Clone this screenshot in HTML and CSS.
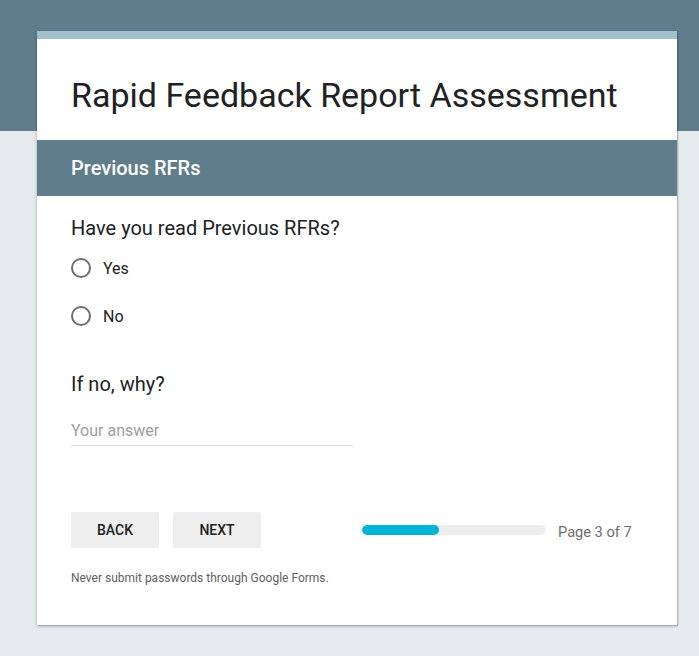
FILE: index.html
```html
<!DOCTYPE html>
<html>
<head>
<meta charset="utf-8">
<link rel="stylesheet" href="styles.css">
</head>
<body>
<div class="page">
  <div class="card">
    <div class="title-area">
      <h1 class="title">Rapid Feedback Report Assessment</h1>
    </div>
    <div class="section-header">Previous RFRs</div>
    <div class="card-body">
      <div class="question">Have you read Previous RFRs?</div>
      <div class="options">
        <label class="option"><span class="radio"></span><span class="option-label">Yes</span></label>
        <label class="option"><span class="radio"></span><span class="option-label">No</span></label>
      </div>
      <div class="question question-2">If no, why?</div>
      <div class="answer"><span class="placeholder">Your answer</span></div>
      <div class="nav-row">
        <div class="buttons">
          <div class="btn">BACK</div>
          <div class="btn">NEXT</div>
        </div>
        <div class="progress">
          <div class="track"><div class="fill" style="width: 42%"></div></div>
          <span class="page-count">Page 3 of 7</span>
        </div>
      </div>
      <div class="footer-note">Never submit passwords through Google Forms.</div>
    </div>
  </div>
</div>
</body>
</html>
```

FILE: styles.css
```css
html, body {
  margin: 0;
  padding: 0;
}
body {
  background: linear-gradient(to bottom, #607d8b 0, #607d8b 131px, #e5eaed 131px, #e5eaed 100%);
  min-height: 656px;
  font-family: Roboto, "Noto Sans", sans-serif;
}
.page {
  padding-top: 31px;
  padding-left: 37px;
}
.card {
  width: 640px;
  background: #ffffff;
  border-top: 8px solid #a2bfd0;
  box-shadow: 0 1px 3px rgba(0,0,0,0.28), 1px 1px 1px rgba(0,0,0,0.12);
}
.title-area {
  height: 101px;
  padding: 0 34px;
  box-sizing: border-box;
  padding-top: 36px;
}
.title {
  margin: 0;
  font-size: 34px;
  font-weight: 400;
  line-height: 40px;
  color: #202124;
}
.section-header {
  height: 56px;
  line-height: 56px;
  background: #607d8b;
  color: #ffffff;
  font-size: 20px;
  font-weight: 500;
  padding: 0 34px;
}
.card-body {
  padding: 20px 34px 39px;
}
.question {
  font-size: 20px;
  line-height: 24px;
  color: #202124;
}
.options {
  margin-top: 4px;
  display: flex;
  flex-direction: column;
}
.option {
  height: 48px;
  display: flex;
  align-items: center;
}
.radio {
  width: 16px;
  height: 16px;
  border: 2px solid #6f6f6f;
  border-radius: 50%;
  box-sizing: content-box;
}
.option-label {
  margin-left: 12px;
  font-size: 16px;
  color: #202124;
}
.question-2 {
  margin-top: 32px;
}
.answer {
  margin-top: 23px;
  width: 282px;
  border-bottom: 1px solid #e0e0e0;
  padding-bottom: 2px;
  line-height: 24px;
}
.placeholder {
  font-size: 16px;
  color: #9e9e9e;
}
.nav-row {
  margin-top: 66px;
  display: flex;
  align-items: center;
}
.buttons {
  display: flex;
  gap: 14px;
}
.btn {
  width: 88px;
  height: 36px;
  line-height: 36px;
  text-align: center;
  background: #eeeeee;
  border-radius: 2px;
  font-size: 14px;
  font-weight: 500;
  color: #212121;
}
.progress {
  margin-left: 101px;
  display: flex;
  align-items: center;
  gap: 12px;
}
.track {
  width: 184px;
  height: 10px;
  border-radius: 5px;
  background: #eeeeee;
  overflow: hidden;
}
.fill {
  height: 100%;
  background: #00b4d3;
  border-radius: 5px;
}
.page-count {
  font-size: 14.6px;
  color: #6d6d6d;
  padding-top: 3px;
}
.footer-note {
  margin-top: 22px;
  font-size: 12px;
  line-height: 16px;
  color: #616161;
}
```
